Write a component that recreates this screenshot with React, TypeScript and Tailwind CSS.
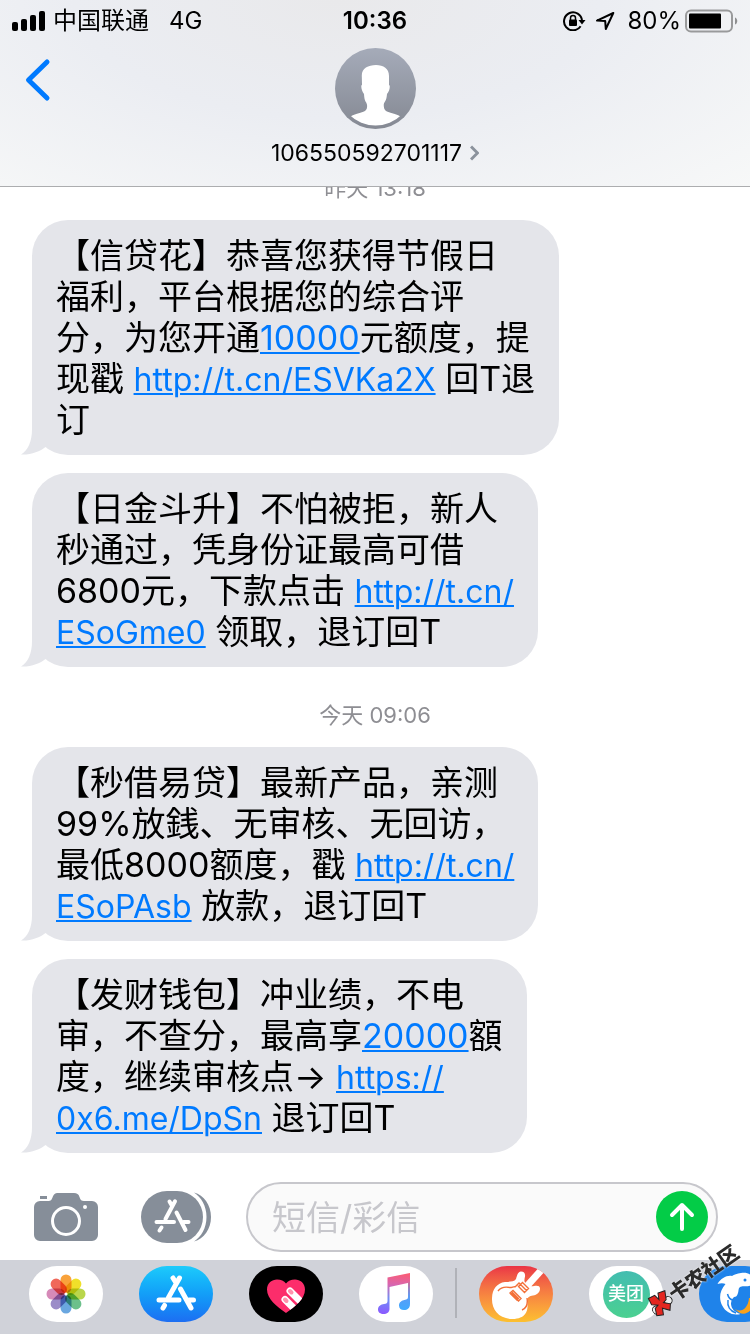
import React, { useState } from 'react';

interface TextPart {
  text: string;
  href?: string;
}

interface Message {
  id: string;
  lines: TextPart[][];
}

const YESTERDAY: Message[] = [
  {
    id: 'xindaihua',
    lines: [
      [{ text: '【信贷花】恭喜您获得节假日' }],
      [{ text: '福利，平台根据您的综合评' }],
      [{ text: '分，为您开通' }, { text: '10000', href: 'tel:10000' }, { text: '元额度，提' }],
      [{ text: '现戳 ' }, { text: 'http://t.cn/ESVKa2X', href: 'http://t.cn/ESVKa2X' }, { text: ' 回T退' }],
      [{ text: '订' }]
    ]
  },
  {
    id: 'rijindousheng',
    lines: [
      [{ text: '【日金斗升】不怕被拒，新人' }],
      [{ text: '秒通过，凭身份证最高可借' }],
      [{ text: '6800元，下款点击 ' }, { text: 'http://t.cn/', href: 'http://t.cn/ESoGme0' }],
      [{ text: 'ESoGme0', href: 'http://t.cn/ESoGme0' }, { text: ' 领取，退订回T' }]
    ]
  }
];

const TODAY: Message[] = [
  {
    id: 'miaojieyidai',
    lines: [
      [{ text: '【秒借易贷】最新产品，亲测' }],
      [{ text: '99%放銭、无审核、无回访，' }],
      [{ text: '最低8000额度，戳 ' }, { text: 'http://t.cn/', href: 'http://t.cn/ESoPAsb' }],
      [{ text: 'ESoPAsb', href: 'http://t.cn/ESoPAsb' }, { text: ' 放款，退订回T' }]
    ]
  },
  {
    id: 'facaiqianbao',
    lines: [
      [{ text: '【发财钱包】冲业绩，不电' }],
      [{ text: '审，不查分，最高享' }, { text: '20000', href: 'tel:20000' }, { text: '額' }],
      [{ text: '度，继续审核点→ ' }, { text: 'https://', href: 'https://0x6.me/DpSn' }],
      [{ text: '0x6.me/DpSn', href: 'https://0x6.me/DpSn' }, { text: ' 退订回T' }]
    ]
  }
];

const StatusBar: React.FC = () => (
  <div className="grid h-[42px] grid-cols-3 items-center px-3 text-2xl leading-10">
    <div className="flex items-center whitespace-nowrap">
      <svg className="mr-2 h-5 w-[33px]" viewBox="0 0 33 20">
        <rect x="0" y="11" width="6" height="9" rx="2" />
        <rect x="9" y="8" width="6" height="12" rx="2" />
        <rect x="18" y="4" width="6" height="16" rx="2" />
        <rect x="27" y="0" width="6" height="20" rx="2" />
      </svg>
      <span>中国联通</span>
      <span className="ml-5">4G</span>
    </div>
    <div className="text-center font-semibold">10:36</div>
    <div className="flex items-center justify-end whitespace-nowrap">
      <svg className="h-5 w-6" viewBox="0 0 24 20" fill="none" stroke="black" strokeWidth="2">
        <path d="M17.6 15.2A9 9 0 1 1 19 9.5" />
        <path d="M15.5 9h7l-3.5 4.5z" fill="black" stroke="none" />
        <rect x="6" y="8.5" width="8" height="6.5" rx="1" fill="black" stroke="none" />
        <path d="M7.5 9V7a2.5 2.5 0 0 1 5 0v2" strokeWidth="1.5" />
      </svg>
      <svg className="ml-2 h-5 w-5" viewBox="0 0 20 20" fill="none" stroke="black" strokeWidth="2" strokeLinejoin="round">
        <path d="M18.3 2 2 9.6l8.2.5.6 7.9z" />
      </svg>
      <span className="ml-3">80%</span>
      <svg className="ml-1 h-6 w-[53px]" viewBox="0 0 53 24">
        <rect x="1" y="1.5" width="46" height="21" rx="5" fill="none" stroke="#999a9b" strokeWidth="2" />
        <rect x="4" y="4.5" width="32" height="15" rx="1" />
        <path d="M50 8.5c3 1 3 6 0 7z" fill="#8e8f90" />
      </svg>
    </div>
  </div>
);

const Avatar: React.FC = () => (
  <svg className="size-[81px]" viewBox="0 0 81 81">
    <defs>
      <linearGradient id="avatar" x1="0" y1="0" x2="0" y2="1">
        <stop offset="0" stopColor="#a5abb9" />
        <stop offset="1" stopColor="#858993" />
      </linearGradient>
      <clipPath id="avatarClip">
        <circle cx="40.5" cy="40.5" r="37" />
      </clipPath>
    </defs>
    <circle cx="40.5" cy="40.5" r="40.5" fill="url(#avatar)" />
    <path
      clipPath="url(#avatarClip)"
      fill="white"
      d="M41 17c7.500 0 13 3.500 13 11v9c1.500 0 .8 6-2 9-.3 3.500-.6 5.500-2 7.500-1.500 2-1.500 4-.8 7 1 3 5 4 9.800 5.300 3 .8 5.500 1.700 8 3.700V81H14V69.500c2.500-2 5-2.900 8-3.700 4.800-1.300 8.800-2.300 9.800-5.300.7-3 .2-5-1.300-7-1-2-1.300-4-1.500-7.500-2.500-3-3.500-9-2-9l-.2-9C26.500 20.500 33 17 41 17z"
    />
  </svg>
);

const Header: React.FC = () => (
  <header className="relative z-10 h-[187px] shrink-0 border-b border-[#acadaf] bg-[#f6f7f7] bg-[radial-gradient(ellipse_at_45%_0%,#e9e9eb_0%,#ebedf2_45%,#f7f8f8_100%)]">
    <StatusBar />
    <div className="grid grid-cols-[1fr_auto_1fr] items-start px-6 pt-[6px]">
      <button aria-label="返回" className="mt-2 w-7">
        <svg className="h-12 w-7" viewBox="0 0 28 48" fill="none" stroke="#007aff" strokeWidth="5" strokeLinecap="round" strokeLinejoin="round">
          <path d="M23 6 4.500 24 23 42" />
        </svg>
      </button>
      <button className="flex flex-col items-center">
        <Avatar />
        <span className="mt-2 flex items-center gap-2 text-[23px] leading-8">
          106550592701117
          <svg className="h-4 w-[9px]" viewBox="0 0 9 16" fill="none" stroke="#8b929c" strokeWidth="3">
            <path d="M1 1.500 7.500 8 1 14.500" />
          </svg>
        </span>
      </button>
    </div>
  </header>
);

const Bubble: React.FC<{ message: Message }> = ({ message }) => (
  <div className="relative w-fit rounded-[36px] bg-[#e4e5ea] px-6 py-[15px] text-[34px] leading-[41px] whitespace-nowrap">
    <svg className="absolute bottom-0 -left-[11px] h-9 w-9" viewBox="0 0 36 36" fill="#e4e5ea">
      <path d="M11 0v10C11 23 7 31 0 35.500c10 .5 19-3 24.500-7.500L36 20V0z" />
    </svg>
    {message.lines.map((line, i) => (
      <p key={i} className="relative h-[41px]">
        {line.map((part, j) =>
          part.href ? (
            <a
              key={j}
              href={part.href}
              className={`text-[#007aff] underline decoration-2 underline-offset-2 ${part.href.startsWith('tel:') ? 'text-[34px]' : 'text-[32px]'}`}
            >
              {part.text}
            </a>
          ) : (
            <span key={j} className="whitespace-pre">{part.text}</span>
          )
        )}
      </p>
    ))}
  </div>
);

const TimeLabel: React.FC<{ children: React.ReactNode }> = ({ children }) => (
  <p className="text-center text-[22px] leading-8 text-[#8e8e93]">{children}</p>
);

const StoreGlyph: React.FC = () => (
  <path d="M34 10.300 24.500 28M28.500 10.500l2 3.500M35.500 21.500 44.500 39M20.500 36.500 18.500 39.500M15.500 31H33M42.500 31h5" fill="none" stroke="white" strokeWidth="4" strokeLinecap="round" />
);

const Composer: React.FC = () => {
  const [text, setText] = useState('');

  return (
    <form className="flex shrink-0 items-center bg-white py-2 pr-8 pl-[34px]" onSubmit={(e) => e.preventDefault()}>
      <button type="button" aria-label="相机">
        <svg className="h-12 w-16" viewBox="0 0 64 48">
          <path fill="#868e99" d="M6 3h7v3H6zM6 8h8c3 0 3.500-1 4.500-3.500C20 1 21 0 24 0h16c3 0 4.500 1 5.500 4 1 3 2 4 4.500 4h8a6 6 0 0 1 6 6v28a6 6 0 0 1-6 6H6a6 6 0 0 1-6-6V14a6 6 0 0 1 6-6z" />
          <circle cx="32" cy="28" r="13.500" fill="none" stroke="white" strokeWidth="3" />
          <circle cx="51" cy="14" r="2" fill="white" />
        </svg>
      </button>
      <button type="button" aria-label="应用" className="ml-[43px]">
        <svg className="h-[52px] w-[70px]" viewBox="0 0 70 52">
          <path d="M53 1.500C63 4 70 14 70 26s-7 22-17 24.500C60 46 65.500 37 65.500 26S60 6 53 1.500z" fill="#868e99" />
          <rect width="62" height="52" rx="26" fill="#868e99" />
          <StoreGlyph />
        </svg>
      </button>
      <div className="ml-[35px] flex h-[70px] min-w-0 flex-1 items-center rounded-full border-2 border-[#c7c7cc] bg-[#fafafa] pr-2 pl-6">
        <input
          aria-label="短信/彩信"
          placeholder="短信/彩信"
          value={text}
          onChange={(e) => setText(e.target.value)}
          className="min-w-0 flex-1 bg-transparent text-[34px] outline-none placeholder:text-[#c7c7cc]"
        />
        <button type="submit" aria-label="发送" className="size-[52px] rounded-full bg-[#03cc47]">
          <svg className="size-[52px]" viewBox="0 0 52 52" fill="none" stroke="white" strokeWidth="4" strokeLinecap="round" strokeLinejoin="round">
            <path d="M26 38V14.500M16 24l10-10 10 10" />
          </svg>
        </button>
      </div>
    </form>
  );
};

const PETALS = [
  { angle: 0, color: '#f9a23b' },
  { angle: 45, color: '#f0e02a' },
  { angle: 90, color: '#b9d64b' },
  { angle: 135, color: '#6cc08b' },
  { angle: 180, color: '#6aa7e0' },
  { angle: 225, color: '#9b8cc8' },
  { angle: 270, color: '#d68ab8' },
  { angle: 315, color: '#f0685a' }
];

const PhotosIcon: React.FC = () => (
  <svg className="h-14 w-[74px]" viewBox="0 0 74 56">
    {PETALS.map(({ angle, color }) => (
      <rect key={angle} x="31.500" y="8.500" width="11" height="18.500" rx="5.500" fill={color} transform={`rotate(${angle} 37 28)`} className="mix-blend-multiply" />
    ))}
    <circle cx="37" cy="28" r="1.500" fill="white" />
  </svg>
);

const AppStoreIcon: React.FC = () => (
  <svg className="h-14 w-[74px]" viewBox="0 0 74 56" fill="none" stroke="white" strokeWidth="5" strokeLinecap="round">
    <path d="M40.500 12 29.500 31.500M34 12l2.500 4M41.500 23 52 42M25.500 39.500 24 42M20 34h20M50 34h4.500" />
  </svg>
);

const HeartIcon: React.FC = () => (
  <svg className="h-14 w-[74px]" viewBox="0 0 74 56">
    <defs>
      <clipPath id="heart">
        <path d="M37 47C28 40.500 18 33 18 23.500 18 17 23 13.500 28 13.500c4 0 7 1.500 9 4 2-2.500 5-4 9-4 5 0 10 3.500 10 10C56 33 46 40.500 37 47z" />
      </clipPath>
    </defs>
    <g clipPath="url(#heart)">
      <path d="M0 0h74v56H0z" fill="#fc2d6b" />
      <path d="m41 25 18 18M36 33.500l16 16" stroke="white" strokeWidth="7" strokeLinecap="round" />
      <path d="m41 25 1.500 1.500M36 33.500l1.500 1.500" stroke="#ff93ad" strokeWidth="4" strokeLinecap="round" />
    </g>
  </svg>
);

const MusicIcon: React.FC = () => (
  <svg className="h-14 w-[74px]" viewBox="0 0 74 56">
    <defs>
      <linearGradient id="music" gradientUnits="userSpaceOnUse" x1="40" y1="7" x2="36" y2="48">
        <stop offset="0" stopColor="#fb5c74" />
        <stop offset="0.3" stopColor="#d765b0" />
        <stop offset="0.65" stopColor="#6f8ff5" />
        <stop offset="1" stopColor="#8a5cff" />
      </linearGradient>
      <linearGradient id="note" gradientUnits="userSpaceOnUse" x1="0" y1="10" x2="0" y2="44">
        <stop offset="0" stopColor="#fb5c74" />
        <stop offset="0.6" stopColor="#5b9bf5" />
        <stop offset="1" stopColor="#3faaff" />
      </linearGradient>
    </defs>
    <path fill="url(#music)" d="M28.500 11.500 51 7v9.500L30.500 21v22c0 3-2.500 5-6 5-3 0-5.500-1.500-5.500-4.500 0-3.500 3-5 6-5.500 2.500-.4 3.500-.8 3.500-3z" />
    <path fill="url(#note)" d="M49 16h2v22c0 4-2.500 6-6 6-3 0-5-1.500-5-4.500 0-3.500 3-5 5.500-5.500s3.500-1 3.500-3z" />
  </svg>
);

const GuitarIcon: React.FC = () => (
  <svg className="h-14 w-[74px]" viewBox="0 0 74 56">
    <path d="M48 20 66 0" stroke="white" strokeWidth="7" />
    <path fill="white" d="M37 13c1-3 1.500-7 5-7.500 3 0 4.500 2 4 5-.5 3-1.500 5 1 7 2.500 2.500 5 3 8 2.500s6-.5 6 2.500c0 4-3 6.500-7 7-4 .5-6 2-5.500 6 .5 8 0 17-15 17.500C20 53 12.500 44 13 32c.3-9 5-15 13-16 5-.5 9 0 11-3z" />
    <path d="M19 25c3-4 7-4.500 12-3.500 4 .5 6-1 8-3M43 44c5-2 6-6 5-12M36 21l4-4 1.500 1.500-2 2 6 6 2-2-6-6 2-2 6 6-3 3M31 27l3-2.500 8 8-2.500 2.500z" fill="none" stroke="#f37038" strokeWidth="1.400" />
    <path d="m31 28 2.500-2.500 7 7L38 35z" fill="#f37038" />
  </svg>
);

const DolphinIcon: React.FC = () => (
  <svg className="h-14 w-[74px]" viewBox="0 0 74 56">
    <path d="M36 43c6 4 13 0 14-11h5c1 14-11 21-19 11z" fill="#f9a11b" />
    <path fill="white" d="M54 13c-1-5-6-7-12-6-4 .5-7 1.500-9 3-5-1-11 2-14.500 8 3-1 6-1 8 0-6 7-7 15-3 22 3 6 10 10 18 8-6-2-9-5-9.500-10 0-3 1-5 3-7 2 0 3-1 4-4 1-3 0-4 2-6 3-2 8 1 13-3z" />
    <path d="M28.500 28c1 4 3 6 6 6M29 34c-1 6 2 11 8 13" fill="none" stroke="#1f83ea" strokeWidth="1.500" />
    <circle cx="46" cy="14" r="1.500" fill="#1f83ea" />
  </svg>
);

const Pill: React.FC<{ label: string; color: string; children: React.ReactNode }> = ({ label, color, children }) => (
  <button aria-label={label} className={`flex h-14 w-[74px] shrink-0 items-center justify-center overflow-hidden rounded-full ${color}`}>
    {children}
  </button>
);

const AppDock: React.FC = () => (
  <nav className="flex h-[74px] shrink-0 gap-9 overflow-hidden bg-[#d0d2d9] pt-[6px] pl-[29px]">
    <Pill label="照片" color="bg-white"><PhotosIcon /></Pill>
    <Pill label="App Store" color="bg-linear-to-b from-[#1ecbfb] to-[#1d6ef2]"><AppStoreIcon /></Pill>
    <Pill label="Digital Touch" color="bg-black"><HeartIcon /></Pill>
    <div className="flex shrink-0 gap-[22px]">
      <Pill label="音乐" color="bg-white"><MusicIcon /></Pill>
      <div className="mt-[2px] h-[50px] w-[2px] bg-[#b0b2b8]" />
      <Pill label="库乐队" color="bg-linear-to-b from-[#ea3346] to-[#fcc02f]"><GuitarIcon /></Pill>
    </div>
    <Pill label="美团" color="bg-white">
      <span className="flex size-[47px] items-center justify-center rounded-full bg-linear-to-b from-[#43bdb0] to-[#4bd090] text-lg font-medium text-white">美团</span>
    </Pill>
    <Pill label="携程" color="bg-[#1f83ea]"><DolphinIcon /></Pill>
  </nav>
);

const Watermark: React.FC = () => (
  <div className="pointer-events-none absolute right-1 bottom-[42px] z-20 flex -rotate-[35deg] items-center">
    <svg className="size-6" viewBox="0 0 24 24">
      <g stroke="#222" strokeWidth="1">
        <circle cx="4" cy="15" r="4" fill="#eee" />
        <circle cx="19" cy="14" r="4" fill="#eee" />
        <path fill="#e3261f" d="m4 1 7 1 1 6 3-6 7 2-4 8-4 1 5 5-4 5-5-6-3 6-6-3 3-7 4-1-5-4z" />
      </g>
    </svg>
    <span className="text-xl leading-6 font-black text-[#2b2b2b] [text-shadow:0_0_2px_white]">卡农社区</span>
  </div>
);

export default function App() {
  return (
    <div className="relative flex h-screen flex-col overflow-hidden bg-white font-[Inter,'Noto_Sans_CJK_SC',sans-serif] text-black">
      <Header />
      <main className="flex min-h-0 flex-1 flex-col justify-end overflow-hidden px-8 pb-[21px]">
        <TimeLabel>昨天 13:18</TimeLabel>
        <div className="mt-4 flex flex-col gap-[18px]">
          {YESTERDAY.map((message) => (
            <Bubble key={message.id} message={message} />
          ))}
        </div>
        <div className="mt-8 mb-4">
          <TimeLabel>今天 09:06</TimeLabel>
        </div>
        <div className="flex flex-col gap-[18px]">
          {TODAY.map((message) => (
            <Bubble key={message.id} message={message} />
          ))}
        </div>
      </main>
      <Composer />
      <AppDock />
      <Watermark />
    </div>
  );
}
